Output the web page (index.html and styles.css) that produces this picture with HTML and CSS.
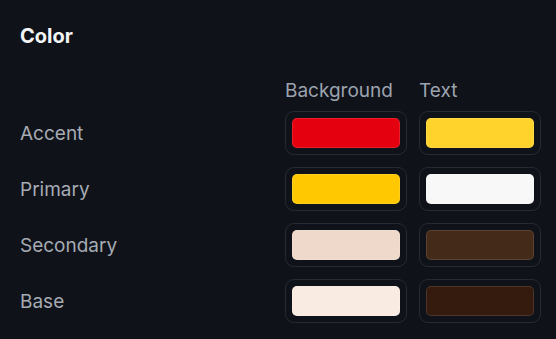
FILE: index.html
```html
<!DOCTYPE html>
<html lang="en">
  <head>
    <meta charset="UTF-8" />
    <meta name="viewport" content="width=device-width, initial-scale=1.0" />
    <title>Color</title>
    <link rel="stylesheet" href="styles.css">
  </head>
  <body>
    <div class="panel">
      <h2>Color</h2>
      <div class="color-grid">
        <div></div>
        <div class="col-head">Background</div>
        <div class="col-head">Text</div>

        <div class="row-label">Accent</div>
        <div class="swatch"><span class="fill" style="background:#e4000f"></span></div>
        <div class="swatch"><span class="fill" style="background:#ffd32b"></span></div>

        <div class="row-label">Primary</div>
        <div class="swatch"><span class="fill" style="background:#ffc800"></span></div>
        <div class="swatch"><span class="fill" style="background:#f8f8f8"></span></div>

        <div class="row-label">Secondary</div>
        <div class="swatch"><span class="fill" style="background:#eed9cb"></span></div>
        <div class="swatch"><span class="fill" style="background:#442a18"></span></div>

        <div class="row-label">Base</div>
        <div class="swatch"><span class="fill" style="background:#f9ebe2"></span></div>
        <div class="swatch"><span class="fill" style="background:#341b0d"></span></div>
      </div>
    </div>
  </body>
</html>
```

FILE: styles.css
```css
body {
  margin: 0;
  background-color: #0f1219;
  font-family: Inter, "Noto Sans", sans-serif;
}
.panel {
  padding: 23px 15px 0 20px;
}
.panel h2 {
  margin: 0;
  font-size: 20px;
  font-weight: 700;
  line-height: 26px;
  color: #f3f4f6;
}
.color-grid {
  display: grid;
  grid-template-columns: 1fr 122px 122px;
  column-gap: 12px;
  row-gap: 12px;
  align-items: center;
  margin-top: 30px;
}
.col-head {
  font-size: 19px;
  line-height: 24px;
  color: #9ca3af;
  margin-bottom: -4px;
}
.row-label {
  font-size: 19px;
  color: #a6abb4;
  padding-top: 1px;
}
.swatch {
  height: 44px;
  box-sizing: border-box;
  border: 1px solid #262a33;
  border-radius: 9px;
  padding: 6px;
  display: flex;
}
.fill {
  flex: 1;
  border-radius: 5px;
  box-shadow: inset 0 0 0 1px rgba(255, 255, 255, 0.12);
}
```
